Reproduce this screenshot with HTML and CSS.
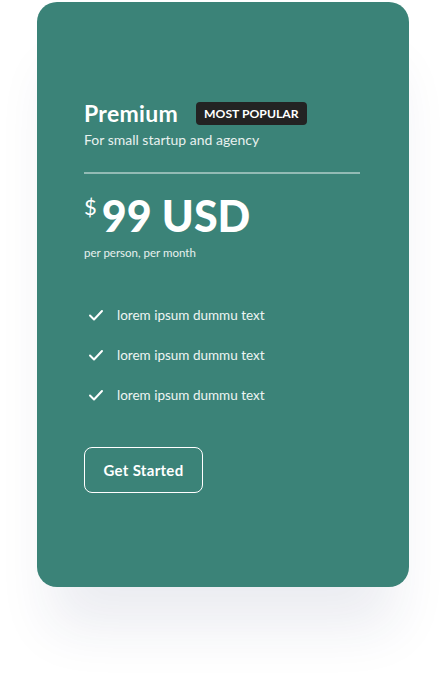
FILE: index.html
```html
<!DOCTYPE html>
<html>
<head>
<meta charset="utf-8">
<link rel="stylesheet" href="styles.css">
</head>
<body>
<div class="page">
  <div class="card">
    <div class="head">
      <h2 class="title">Premium</h2>
      <span class="badge">MOST POPULAR</span>
    </div>
    <p class="subtitle">For small startup and agency</p>
    <hr class="divider">
    <div class="price">
      <span class="currency">$</span>
      <span class="amount">99 USD</span>
    </div>
    <p class="period">per person, per month</p>
    <ul class="features">
      <li class="feature">
        <svg class="check" viewBox="0 0 16 16" width="16" height="16"><path d="M2 8.5l4 4L14 4" fill="none" stroke="#fff" stroke-width="2" stroke-linecap="round" stroke-linejoin="round"/></svg>
        <span>lorem ipsum dummu text</span>
      </li>
      <li class="feature">
        <svg class="check" viewBox="0 0 16 16" width="16" height="16"><path d="M2 8.5l4 4L14 4" fill="none" stroke="#fff" stroke-width="2" stroke-linecap="round" stroke-linejoin="round"/></svg>
        <span>lorem ipsum dummu text</span>
      </li>
      <li class="feature">
        <svg class="check" viewBox="0 0 16 16" width="16" height="16"><path d="M2 8.5l4 4L14 4" fill="none" stroke="#fff" stroke-width="2" stroke-linecap="round" stroke-linejoin="round"/></svg>
        <span>lorem ipsum dummu text</span>
      </li>
    </ul>
    <button class="cta">Get Started</button>
  </div>
</div>
</body>
</html>
```
FILE: styles.css
```css
html, body {
  margin: 0;
  padding: 0;
  background: #ffffff;
}
body {
  font-family: Lato, "Noto Sans", sans-serif;
  width: 446px;
  height: 685px;
  overflow: hidden;
}
.page {
  padding: 2px 0 0 37px;
}
.card {
  box-sizing: border-box;
  width: 372px;
  height: 585px;
  background: #3b8378;
  border-radius: 20px;
  padding: 96px 49px 0 47px;
  color: #ffffff;
  box-shadow: 0 55px 55px -15px rgba(30, 40, 100, 0.09);
}
.head {
  display: flex;
  align-items: center;
  gap: 18px;
}
.title {
  margin: 0;
  font-size: 23px;
  font-weight: 700;
  line-height: 30px;
  letter-spacing: 0.3px;
}
.badge {
  background: #232323;
  color: #fff;
  font-size: 12.2px;
  font-weight: 700;
  letter-spacing: 0;
  padding: 0 8px;
  height: 23px;
  line-height: 23px;
  border-radius: 4px;
}
.subtitle {
  margin: 3px 0 0;
  font-size: 14px;
  line-height: 18px;
  color: #e8f1ef;
}
.divider {
  margin: 23px 0 0;
  border: 0;
  height: 2px;
  background: rgba(255, 255, 255, 0.45);
}
.price {
  display: flex;
  align-items: flex-start;
  margin-top: 19px;
  height: 46px;
}
.currency {
  font-size: 22px;
  font-weight: 400;
  line-height: 22px;
  margin-right: 5px;
  margin-top: 3px;
}
.amount {
  font-size: 43px;
  font-weight: 900;
  line-height: 46px;
}
.period {
  margin: 7px 0 0;
  font-size: 11.5px;
  line-height: 14px;
  color: #e8f1ef;
}
.features {
  list-style: none;
  margin: 46px 0 0;
  padding: 0;
  display: flex;
  flex-direction: column;
  gap: 22px;
}
.feature {
  display: flex;
  align-items: center;
  height: 18px;
  font-size: 13.5px;
  color: #eef5f3;
}
.check {
  margin: 0 13px 0 4px;
}
.cta {
  margin-top: 43px;
  width: 119px;
  height: 46px;
  border: 1px solid #ffffff;
  border-radius: 8px;
  background: transparent;
  color: #ffffff;
  font-family: Lato, "Noto Sans", sans-serif;
  font-size: 15px;
  font-weight: 700;
  letter-spacing: 0.3px;
}
```
